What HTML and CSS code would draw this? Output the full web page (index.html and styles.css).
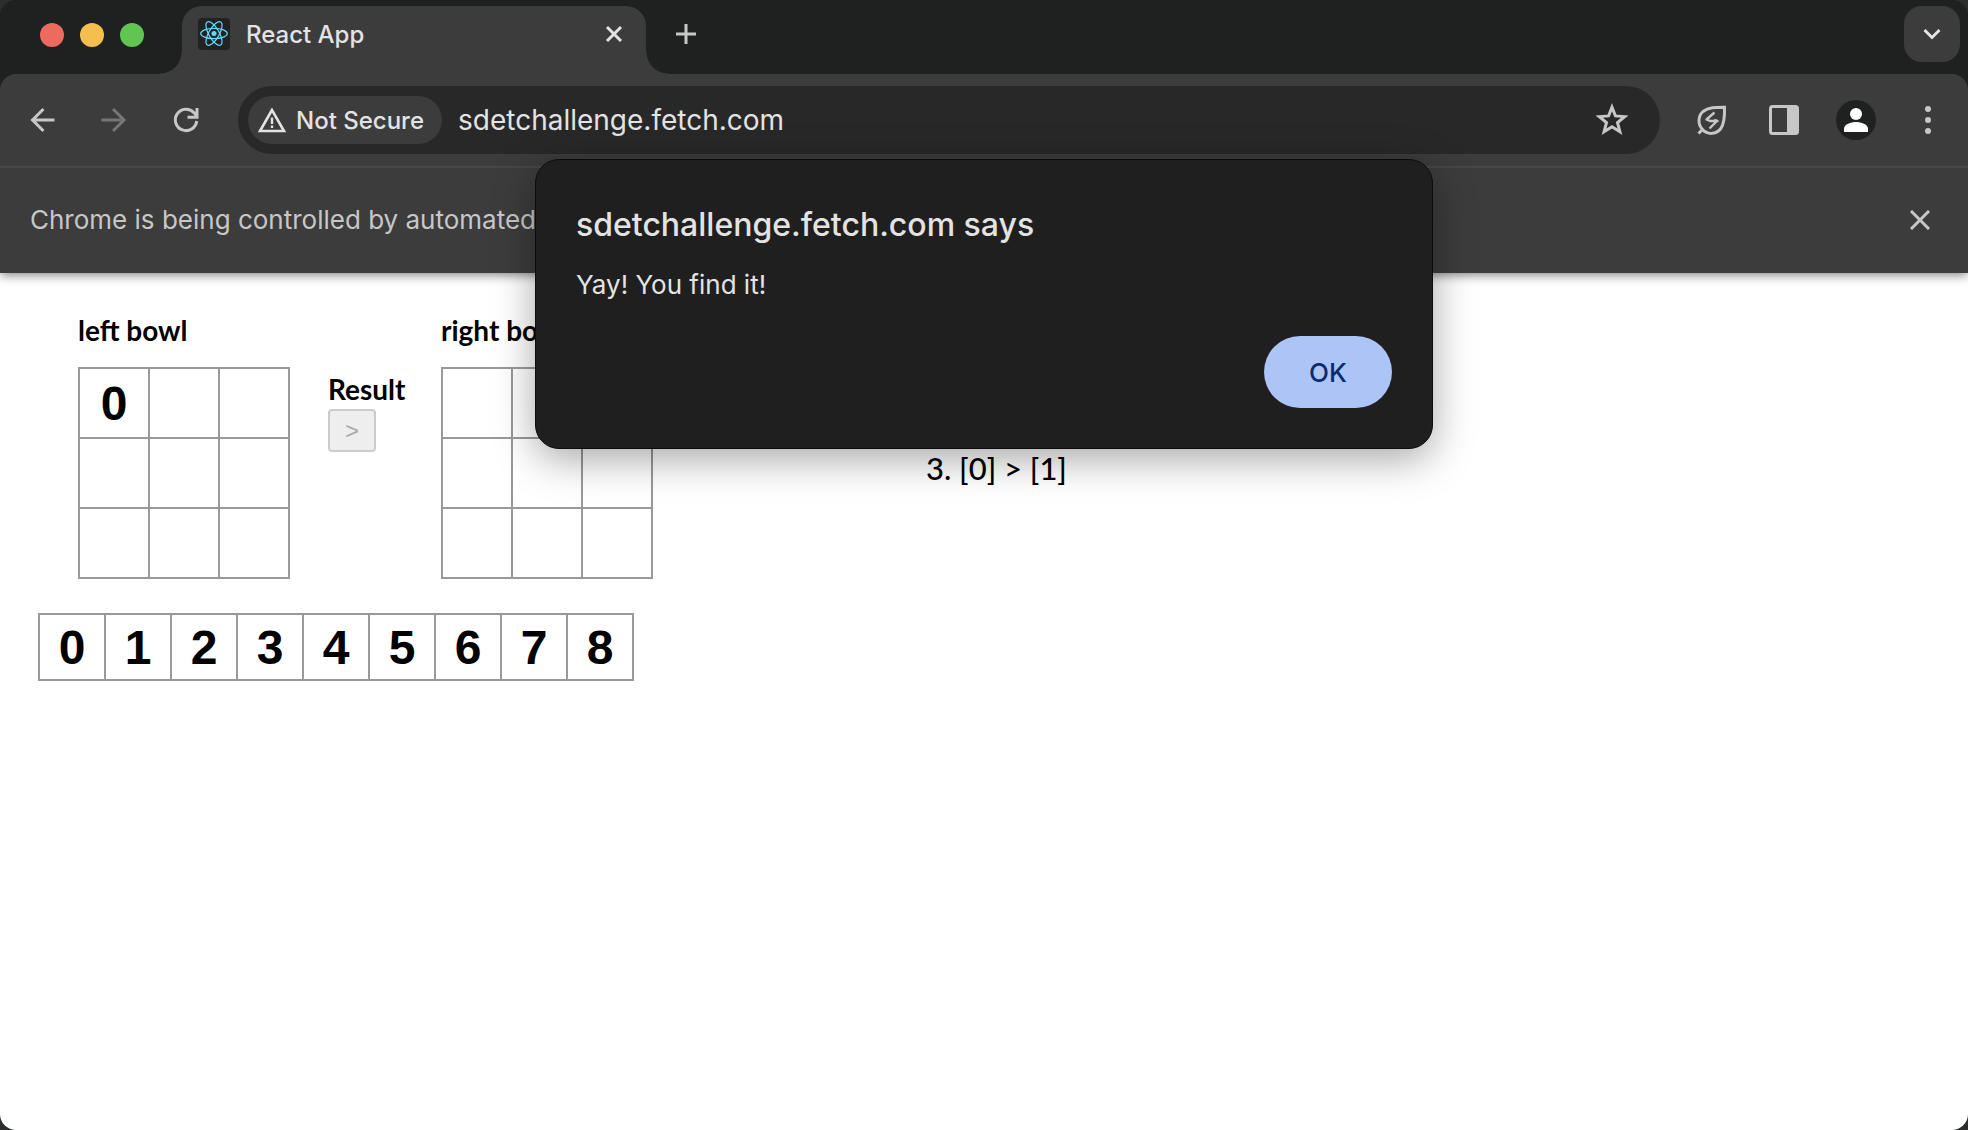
FILE: index.html
```html
<!DOCTYPE html>
<html lang="en">
<head>
<meta charset="utf-8">
<title>React App</title>
<link rel="stylesheet" href="styles.css">
</head>
<body>
<div class="window">
  <header class="tab-strip">
    <div class="lights">
      <button class="light light-close" aria-label="Close window"></button>
      <button class="light light-min" aria-label="Minimize window"></button>
      <button class="light light-max" aria-label="Maximize window"></button>
    </div>
    <div class="tab">
      <svg class="favicon" width="32" height="32" viewBox="0 0 32 32" aria-hidden="true">
        <rect width="32" height="32" rx="4" fill="#222"/>
        <g fill="none" stroke="#61dafb" stroke-width="1.2">
          <ellipse cx="16" cy="15.500" rx="13.300" ry="5.200"/>
          <ellipse cx="16" cy="15.500" rx="13.300" ry="5.200" transform="rotate(60 16 15.500)"/>
          <ellipse cx="16" cy="15.500" rx="13.300" ry="5.200" transform="rotate(120 16 15.500)"/>
        </g>
        <circle cx="16" cy="15.500" r="2.500" fill="#61dafb"/>
      </svg>
      <span class="tab-title">React App</span>
      <button class="icon-button tab-close" aria-label="Close tab">
        <svg width="20" height="20" viewBox="0 0 20 20"><path d="M3 3l14 14M17 3L3 17" stroke="#e3e3e3" stroke-width="3"/></svg>
      </button>
    </div>
    <button class="icon-button new-tab" aria-label="New tab">
      <svg width="20" height="20" viewBox="0 0 20 20"><path d="M10 0v20M0 10h20" stroke="#c7c7c7" stroke-width="3"/></svg>
    </button>
    <button class="icon-button tab-search" aria-label="Search tabs">
      <svg width="20" height="20" viewBox="0 0 20 20"><path d="M2.500 6l7.500 7.500L17.500 6" fill="none" stroke="#e3e3e3" stroke-width="3"/></svg>
    </button>
  </header>

  <nav class="toolbar">
    <div class="nav-buttons">
      <button class="icon-button" aria-label="Back">
        <svg width="28" height="28" viewBox="0 0 28 28"><path d="M26.500 14H4.500M15.500 3l-11 11 11 11" fill="none" stroke="#c7c7c7" stroke-width="3"/></svg>
      </button>
      <button class="icon-button" aria-label="Forward">
        <svg width="28" height="28" viewBox="0 0 28 28"><path d="M1.500 14h22M13 3l11 11-11 11" fill="none" stroke="#757575" stroke-width="3"/></svg>
      </button>
      <button class="icon-button" aria-label="Reload">
        <svg width="28" height="28" viewBox="0 0 28 28"><path d="M24.700 15A10.700 10.700 0 1 1 22 6.700L25 10M25 2v9.300h-9.500" fill="none" stroke="#c7c7c7" stroke-width="3"/></svg>
      </button>
    </div>
    <div class="omnibox">
      <button class="chip">
        <svg width="30" height="26" viewBox="0 0 30 26" aria-hidden="true"><path d="M15 3L3 24h24z" fill="none" stroke="#e3e3e3" stroke-width="2.600"/><path d="M15 10.500v6.500M15 18.500v2.600" stroke="#e3e3e3" stroke-width="2.400"/></svg>
        <span>Not Secure</span>
      </button>
      <input class="address" type="text" value="sdetchallenge.fetch.com" aria-label="Address" readonly>
      <button class="icon-button" aria-label="Bookmark this tab">
        <svg width="34" height="34" viewBox="0 0 34 34"><path d="M17 4.200l3.400 8.700 9.300.7-7.200 6 2.400 9.100L17 23.700l-7.900 5 2.400-9.100-7.200-6 9.300-.7z" fill="none" stroke="#c7c7c7" stroke-width="3"/></svg>
      </button>
    </div>
    <div class="actions">
      <button class="icon-button" aria-label="Energy saver">
        <svg width="32" height="32" viewBox="0 0 32 32"><path d="M6.500 25.500C1.500 20 2 12 7 7.500 12.500 3.200 20 3.300 28.500 3.300 28.800 13 28.500 20 24.500 25c-4.500 5.500-13 6-18 .5zM6.500 25.500L2.500 29.500" fill="none" stroke="#c7c7c7" stroke-width="3"/><path d="M18.500 8.500l-8 7 3.500 1.500h7.500l-3.500-1M21 17l-7.500 7.500" fill="none" stroke="#c7c7c7" stroke-width="2.400" stroke-linejoin="round"/></svg>
      </button>
      <button class="icon-button" aria-label="Side panel">
        <svg width="30" height="30" viewBox="0 0 30 30"><rect x="1.500" y="1.500" width="27" height="27" rx="2" fill="none" stroke="#c7c7c7" stroke-width="3"/><path d="M18 2h10v26H18z" fill="#c7c7c7"/></svg>
      </button>
      <button class="icon-button" aria-label="Profile">
        <svg width="40" height="40" viewBox="0 0 40 40"><circle cx="20" cy="20" r="20" fill="#1f2120"/><circle cx="20" cy="14" r="6" fill="#fff"/><path d="M8 32v-3c0-5 7-7 12-7s12 2 12 7v3z" fill="#fff"/></svg>
      </button>
      <button class="icon-button" aria-label="Menu">
        <svg width="32" height="32" viewBox="0 0 32 32" fill="#c7c7c7"><circle cx="16" cy="5" r="3"/><circle cx="16" cy="16" r="3"/><circle cx="16" cy="27" r="3"/></svg>
      </button>
    </div>
  </nav>

  <div class="infobar">
    <span>Chrome is being controlled by automated</span>
    <button class="icon-button" aria-label="Dismiss">
      <svg width="20" height="20" viewBox="0 0 20 20"><path d="M1 1l18 18M19 1L1 19" stroke="#c7c7c7" stroke-width="3"/></svg>
    </button>
  </div>

  <main class="page">
    <div class="game">
      <section class="bowl">
        <h2 class="label">left bowl</h2>
        <table class="board" aria-label="left bowl">
          <tr><td><input value="0" aria-label="left 0"></td><td><input aria-label="left 1"></td><td><input aria-label="left 2"></td></tr>
          <tr><td><input aria-label="left 3"></td><td><input aria-label="left 4"></td><td><input aria-label="left 5"></td></tr>
          <tr><td><input aria-label="left 6"></td><td><input aria-label="left 7"></td><td><input aria-label="left 8"></td></tr>
        </table>
      </section>
      <section class="result">
        <h2 class="label">Result</h2>
        <button class="result-value" disabled>&gt;</button>
      </section>
      <section class="bowl">
        <h2 class="label">right bowl</h2>
        <table class="board" aria-label="right bowl">
          <tr><td><input aria-label="right 0"></td><td><input aria-label="right 1"></td><td><input aria-label="right 2"></td></tr>
          <tr><td><input aria-label="right 3"></td><td><input aria-label="right 4"></td><td><input aria-label="right 5"></td></tr>
          <tr><td><input aria-label="right 6"></td><td><input aria-label="right 7"></td><td><input aria-label="right 8"></td></tr>
        </table>
      </section>
      <ol class="weighings">
        <li>3. [0] &gt; [1]</li>
      </ol>
    </div>
    <div class="coins">
      <button class="coin">0</button><button class="coin">1</button><button class="coin">2</button><button class="coin">3</button><button class="coin">4</button><button class="coin">5</button><button class="coin">6</button><button class="coin">7</button><button class="coin">8</button>
    </div>
  </main>

  <dialog class="alert" open aria-labelledby="alert-title">
    <h1 class="alert-title" id="alert-title">sdetchallenge.fetch.com says</h1>
    <p class="alert-text">Yay! You find it!</p>
    <button class="alert-ok">OK</button>
  </dialog>
</div>
</body>
</html>
```
FILE: styles.css
```css
* {
  box-sizing: border-box;
}

body {
  margin: 0;
  background: #2b2d2e;
  font-family: Inter, "Liberation Sans", sans-serif;
}

button,
input {
  margin: 0;
  padding: 0;
  border: 0;
  background: none;
  font: inherit;
  outline: 0;
}

svg {
  display: block;
}

.window {
  position: relative;
  display: flex;
  flex-direction: column;
  min-height: 100vh;
  overflow: hidden;
  border-radius: 16px;
  background: #1f2120;
}

.icon-button {
  display: flex;
  align-items: center;
  justify-content: center;
}

.tab-strip {
  display: flex;
  align-items: flex-start;
  height: 74px;
  padding: 6px 8px 0 40px;
}

.lights {
  display: flex;
  gap: 16px;
  width: 142px;
  padding-top: 17px;
}

.light {
  width: 24px;
  height: 24px;
  border-radius: 50%;
}

.light-close {
  background: #ed6a5e;
}

.light-min {
  background: #f5bf4f;
}

.light-max {
  background: #61c554;
}

.tab {
  position: relative;
  display: flex;
  align-items: center;
  width: 464px;
  height: 68px;
  padding: 0 22px 12px 16px;
  border-radius: 20px 20px 0 0;
  background: #3c3c3c;
}

.tab::before,
.tab::after {
  content: "";
  position: absolute;
  bottom: 0;
  width: 22px;
  height: 22px;
}

.tab::before {
  right: 100%;
  background: radial-gradient(circle at 0 0, transparent 21px, #3c3c3c 22px);
}

.tab::after {
  left: 100%;
  background: radial-gradient(circle at 100% 0, transparent 21px, #3c3c3c 22px);
}

.tab-title {
  flex: 1;
  padding-left: 16px;
  color: #e3e3e3;
  font-size: 24px;
  font-weight: 500;
}

.new-tab {
  width: 56px;
  height: 56px;
  margin-left: 12px;
}

.tab-search {
  width: 56px;
  height: 56px;
  margin-left: auto;
  border-radius: 18px;
  background: #3c3c3c;
}

.toolbar {
  position: relative;
  z-index: 1;
  display: flex;
  align-items: center;
  height: 94px;
  padding: 0 20px 0 28px;
  border-bottom: 2px solid #474747;
  border-radius: 16px 16px 0 0;
  background: #3c3c3c;
}

.nav-buttons {
  display: flex;
  gap: 44px;
  width: 210px;
}

.omnibox {
  display: flex;
  flex: 1;
  align-items: center;
  height: 68px;
  padding: 0 31px 0 10px;
  border-radius: 34px;
  background: #282828;
}

.chip {
  display: flex;
  align-items: center;
  gap: 9px;
  height: 48px;
  padding: 0 18px 0 9px;
  border-radius: 24px;
  background: #3c3c3c;
  color: #e3e3e3;
  font-size: 24px;
  font-weight: 500;
}

.address {
  flex: 1;
  padding-left: 16px;
  color: #e3e3e3;
  font-size: 28px;
}

.actions {
  display: flex;
  align-items: center;
  gap: 32px;
  padding-left: 32px;
}

.actions .icon-button {
  width: 40px;
  height: 40px;
}

.infobar {
  position: relative;
  display: flex;
  align-items: center;
  justify-content: space-between;
  height: 105px;
  padding: 0 38px 2px 30px;
  background: #3c3c3c;
  box-shadow: 0 2px 10px rgba(0, 0, 0, 0.5);
  color: #c7c7c7;
  font-size: 26px;
}

.page {
  flex: 1;
  padding: 37px 38px;
  background: #fff;
  color: #000;
}

.game {
  display: flex;
  gap: 38px;
  padding-left: 40px;
}

.label {
  margin: 0;
  font-family: Lato, sans-serif;
  font-size: 28px;
  font-weight: 700;
  line-height: 40px;
}

.board {
  margin-top: 17px;
  border-collapse: collapse;
}

.board td {
  width: 70px;
  height: 70px;
  padding: 0;
  border: 2px solid #999;
}

.board input {
  display: block;
  width: 68px;
  height: 66px;
  font: 700 48px "Liberation Sans", sans-serif;
  text-align: center;
}

.result {
  width: 75px;
  padding-top: 59px;
}

.result-value {
  display: block;
  width: 48px;
  height: 43px;
  border: 2px solid #ccc;
  border-radius: 4px;
  background: #eee;
  color: #aaa;
  font: 24px "Liberation Sans", sans-serif;
}

.weighings {
  margin: 0;
  padding: 138px 0 0 235px;
  list-style: none;
  font-family: Lato, sans-serif;
  font-size: 31px;
  font-weight: 500;
  line-height: 40px;
}

.coins {
  display: flex;
  margin-top: 34px;
  padding-right: 2px;
}

.coin {
  width: 68px;
  height: 68px;
  margin-right: -2px;
  border: 2px solid #999;
  color: #000;
  font: 700 48px "Liberation Sans", sans-serif;
}

.alert {
  position: absolute;
  z-index: 2;
  top: 159px;
  left: 50%;
  display: flex;
  flex-direction: column;
  width: 898px;
  margin: 0 0 0 -449px;
  padding: 45px 40px 40px;
  border: 1px solid #0c0c0c;
  border-radius: 24px;
  background: #1f1f1f;
  box-shadow: 0 10px 40px rgba(0, 0, 0, 0.35);
  color: #e3e3e3;
}

.alert-title {
  margin: 0;
  font-size: 32px;
  font-weight: 500;
  line-height: 40px;
}

.alert-text {
  margin: 24px 0 35px;
  font-size: 26px;
  line-height: 32px;
}

.alert-ok {
  align-self: flex-end;
  width: 128px;
  height: 72px;
  border-radius: 36px;
  background: #adc5f6;
  color: #062e6f;
  font-size: 26px;
  font-weight: 500;
}
```
